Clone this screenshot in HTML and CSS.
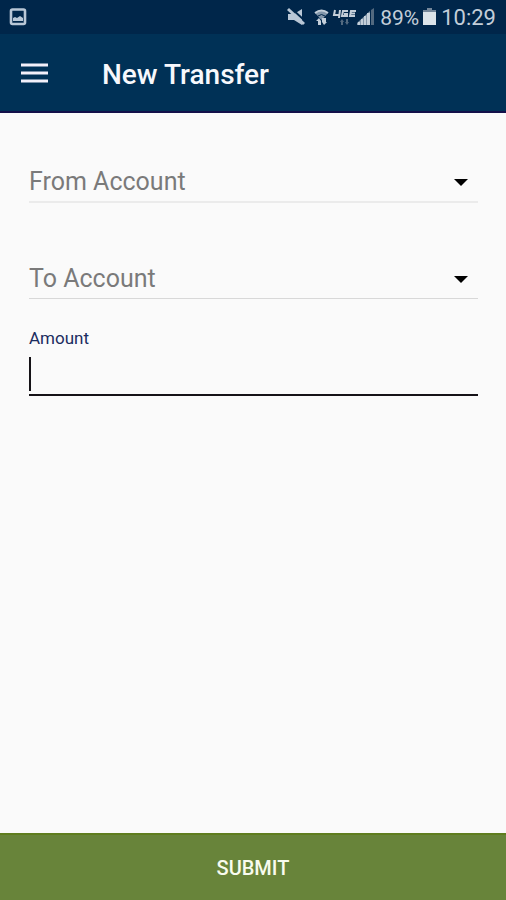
FILE: index.html
```html
<!DOCTYPE html>
<html lang="en">
<head>
<meta charset="utf-8">
<meta name="viewport" content="width=device-width, initial-scale=1">
<title>New Transfer</title>
<link rel="stylesheet" href="styles.css">
</head>
<body>
<div class="status">
  <svg class="picture" width="18" height="18" viewBox="0 0 18 18" aria-hidden="true">
    <rect x="2" y="1.500" width="14" height="14.500" rx="1.500" fill="none" stroke="#b9c7d6" stroke-width="2.600"/>
    <path d="M4 13v-3l2-1 2 1 3-2 3 2v3z" fill="#b9c7d6"/>
  </svg>
  <div class="indicators">
    <svg width="88" height="20" viewBox="0 0 88 20" aria-hidden="true">
      <path d="M1 7h6l8-5v16l-8-5H1z" fill="#b9c7d6"/>
      <path d="M3 0l15 14" stroke="#00264a" stroke-width="2"/>
      <path d="M1 2l16 15" stroke="#b9c7d6" stroke-width="3"/>
      <path d="M28 6q6.500-6 13 0l-6.500 7z" fill="#8296aa"/>
      <path d="M28 6q6.500-5 13 0" fill="none" stroke="#c3ced9" stroke-width="2"/>
      <path d="M31 9q3.500-3 7 0" fill="none" stroke="#00264a" stroke-width="1"/>
      <path d="M29 14l3-3 2 3v4h-3v-4zM35 15v-4h4v4h1l-3 3z" fill="#c3ced9"/>
      <path d="M48 3l-1 5h6M53 3l-1 8M61 4h-5l-1 5h5V7h-3M69 4h-5l-1 5h5M63 6.500h5" fill="none" stroke="#c3ced9" stroke-width="2"/>
      <path d="M53 15l2-3 2 3h-1v3h-2v-3zM58 15h1v-3h2v3h1l-2 3z" fill="#52697f"/>
      <path d="M70 18v-2l13-12v14z" fill="#8296aa"/>
      <path d="M71 15h2v3h-2zM74 12h2v6h-2zM77 9h2v9h-2zM80 6h3v12h-3z" fill="#c3ced9"/>
      <path d="M84 3l3-2v17h-3z" fill="#52697f"/>
    </svg>
    <span class="percent">89%</span>
    <svg width="13" height="18" viewBox="0 0 13 18" aria-hidden="true">
      <path d="M4 0h5v2h4v3H0V2h4z" fill="#75879a"/>
      <path d="M0 4h13v13H0z" fill="#dce4ea"/>
    </svg>
    <span class="clock">10:29</span>
  </div>
</div>
<header class="bar">
  <button class="menu" type="button" aria-label="Menu">
    <svg width="28" height="20" viewBox="0 0 28 20" aria-hidden="true">
      <path d="M1 2h27M1 10h27M1 18h27" stroke="#f2f0fa" stroke-width="3"/>
    </svg>
  </button>
  <h1>New Transfer</h1>
</header>
<form class="form">
  <main class="fields">
    <div class="picker from">
      <select aria-label="From Account"><option>From Account</option></select>
      <svg class="arrow" width="14" height="7" viewBox="0 0 14 7" aria-hidden="true"><path d="M0 0h14L7 7z"/></svg>
    </div>
    <div class="picker">
      <select aria-label="To Account"><option>To Account</option></select>
      <svg class="arrow" width="14" height="7" viewBox="0 0 14 7" aria-hidden="true"><path d="M0 0h14L7 7z"/></svg>
    </div>
    <div class="amount">
      <label for="amount">Amount</label>
      <input id="amount" type="text" inputmode="decimal">
      <span class="caret"></span>
    </div>
  </main>
  <button class="submit" type="submit">SUBMIT</button>
</form>
</body>
</html>
```
FILE: styles.css
```css
* {
  box-sizing: border-box;
}

body {
  margin: 0;
  min-height: 100vh;
  display: flex;
  flex-direction: column;
  background: #fafafa;
  font-family: Roboto, "Liberation Sans", sans-serif;
}

svg {
  display: block;
  flex: none;
}

.status {
  display: flex;
  align-items: center;
  justify-content: space-between;
  height: 34px;
  padding: 0 10px 0 9px;
  background: #00264a;
  color: #c3ced9;
  font-size: 22px;
  line-height: 34px;
}

.indicators {
  display: flex;
  align-items: center;
}

.percent {
  margin: 2px 4px 0 5px;
  font-size: 21px;
}

.clock {
  margin: 2px 0 0 5px;
}

.bar {
  display: flex;
  align-items: center;
  height: 79px;
  padding: 0 20px;
  background: #003156;
  border-bottom: 2px solid #13104a;
}

.menu {
  padding: 0;
  border: 0;
  background: none;
}

.bar h1 {
  margin: 4px 0 0 54px;
  color: #f7f8fc;
  font-size: 28px;
  font-weight: 500;
  line-height: 32px;
}

.form {
  flex: 1;
  display: flex;
  flex-direction: column;
}

.fields {
  flex: 1;
  padding: 48px 28px 0 29px;
}

.picker {
  position: relative;
  border-bottom: 1px solid #d8d8d8;
}

.picker.from {
  margin-bottom: 55px;
  border-bottom: 2px solid #ebebeb;
}

.picker select {
  display: block;
  width: 100%;
  height: 40px;
  padding: 2px 40px 0 0;
  border: 0;
  appearance: none;
  background: none;
  color: #7a7a7a;
  font: 400 25px/36px Roboto, "Liberation Sans", sans-serif;
}

.arrow {
  position: absolute;
  right: 10px;
  top: 18px;
  pointer-events: none;
}

.amount {
  position: relative;
  margin-top: 29px;
}

.amount label {
  display: block;
  color: #1b2c60;
  font-size: 17px;
  line-height: 20px;
}

.amount input {
  display: block;
  width: 100%;
  height: 40px;
  margin-top: 8px;
  padding: 0 4px;
  border: 0;
  border-bottom: 2px solid #151217;
  outline: 0;
  background: none;
  font: 400 25px/36px Roboto, "Liberation Sans", sans-serif;
}

.caret {
  position: absolute;
  left: 0;
  bottom: 5px;
  width: 2px;
  height: 34px;
  background: #151217;
}

.submit {
  height: 67px;
  padding: 0;
  border: 0;
  border-top: 2px solid #5f7d1e;
  background: #68843a;
  color: #f8fbee;
  font: 500 20px/24px Roboto, "Liberation Sans", sans-serif;
}
```
